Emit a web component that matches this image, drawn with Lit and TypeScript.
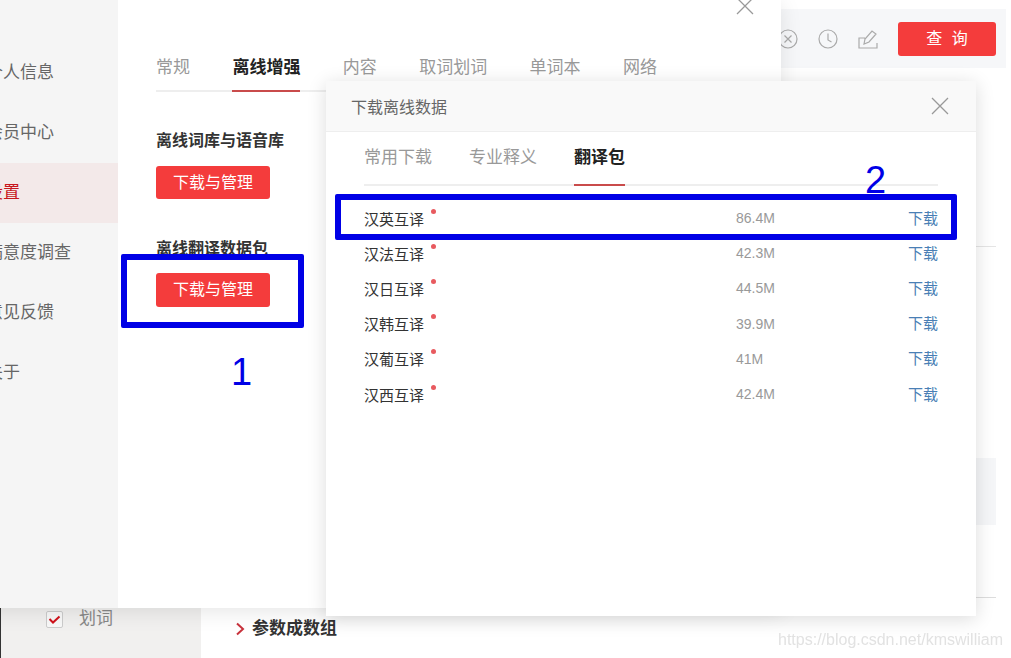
import { LitElement, html, css } from 'lit';
import { customElement } from 'lit/decorators.js';

const NAV = ['个人信息', '会员中心', '设置', '满意度调查', '意见反馈', '关于'];
const SETTING_TABS = ['常规', '离线增强', '内容', '取词划词', '单词本', '网络'];
const DOWNLOAD_TABS = ['常用下载', '专业释义', '翻译包'];
const PACKS = [
  ['汉英互译', '86.4M'],
  ['汉法互译', '42.3M'],
  ['汉日互译', '44.5M'],
  ['汉韩互译', '39.9M'],
  ['汉葡互译', '41M'],
  ['汉西互译', '42.4M'],
];

const closeIcon = html`<svg width="18" height="18" viewBox="0 0 18 18" fill="none" stroke="#999" stroke-width="1.3"><path d="M1 1l16 16M17 1L1 17" /></svg>`;

@customElement('app-root')
export class AppRoot extends LitElement {
  static styles = css`
    :host {
      display: block;
      position: relative;
      width: 1011px;
      height: 658px;
      overflow: hidden;
      background: #fff;
      font-family: "Liberation Sans", "Noto Sans CJK SC", sans-serif;
    }

    /* page behind the dialogs */
    .backdrop {
      display: flex;
      height: 100%;
    }
    .sidebar {
      width: 200px;
      flex-shrink: 0;
      display: flex;
      flex-direction: column;
      justify-content: flex-end;
      background: #f1f0ef;
      border-left: 1px solid #333;
    }
    .check-row {
      display: flex;
      align-items: center;
      gap: 16px;
      margin-bottom: 27px;
      padding-left: 45px;
      font-size: 17px;
      line-height: 24px;
      color: #888;
    }
    .check {
      width: 17px;
      height: 17px;
      box-sizing: border-box;
      display: flex;
      align-items: center;
      justify-content: center;
      background: #f8f8f8;
      border: 1px solid #ccc;
      border-radius: 2px;
    }
    .main {
      flex: 1;
      position: relative;
      display: flex;
      flex-direction: column;
      align-items: flex-end;
      padding-right: 15px;
    }
    .toolbar {
      width: 240px;
      height: 59px;
      box-sizing: border-box;
      margin: 9px -10px 0 0;
      padding-right: 10px;
      display: flex;
      align-items: center;
      justify-content: flex-end;
      background: #f6f7f9;
    }
    .tool-icons {
      display: flex;
      align-items: center;
      gap: 20px;
      margin-right: 20px;
    }
    .query {
      flex-shrink: 0;
      width: 98px;
      height: 34px;
      border-radius: 3px;
      background: #f43c3c;
      color: #fff;
      font-size: 16px;
      line-height: 34px;
      text-align: center;
      word-spacing: 5px;
    }
    .rule {
      width: 300px;
      height: 1px;
      background: #e5e5e5;
    }
    .rule.first {
      margin-top: 178px;
    }
    .block {
      width: 300px;
      height: 67px;
      margin-top: 211px;
      background: #f5f6f8;
    }
    .rule.second {
      margin-top: 72px;
      background: #ddd;
    }
    .param {
      position: absolute;
      left: 34px;
      top: 617px;
      display: flex;
      align-items: center;
      gap: 7px;
      font-size: 17px;
      font-weight: 700;
      line-height: 24px;
      color: #333;
    }
    .param-next {
      position: absolute;
      left: 51px;
      top: 656px;
      font-size: 17px;
      font-weight: 700;
      line-height: 24px;
      color: #333;
    }

    /* settings dialog */
    .settings {
      position: absolute;
      left: -40px;
      top: 0;
      width: 821px;
      height: 608px;
      display: flex;
      background: #fff;
      box-shadow: 0 4px 20px rgba(0, 0, 0, 0.1);
    }
    .nav {
      width: 158px;
      flex-shrink: 0;
      padding-top: 43px;
      box-sizing: border-box;
      background: #f5f5f5;
    }
    .nav-item {
      height: 60px;
      padding-left: 26px;
      font-size: 17px;
      line-height: 60px;
      color: #666;
    }
    .nav-item.active {
      background: #f3e9e9;
      color: #c8161d;
    }
    .content {
      flex: 1;
      position: relative;
      padding: 50px 38px 0;
    }
    .settings-close {
      position: absolute;
      right: 27px;
      top: -3px;
    }
    .tabs {
      display: flex;
      gap: 42.4px;
      border-bottom: 2px solid #eee;
      font-size: 17px;
      line-height: 24px;
      color: #999;
    }
    .tab {
      margin-bottom: -2px;
      padding: 6px 0 10px;
      border-bottom: 2px solid transparent;
    }
    .tab.active {
      border-bottom-color: #c94b4b;
      color: #222;
      font-weight: 700;
    }
    .section-title {
      margin-top: 37px;
      font-size: 16px;
      font-weight: 700;
      line-height: 24px;
      color: #333;
    }
    .section-title.second {
      margin-top: 38px;
    }
    .primary {
      width: 114px;
      height: 33px;
      margin-top: 13px;
      border-radius: 3px;
      background: #f43c3c;
      color: #fff;
      font-size: 16px;
      line-height: 33px;
      text-align: center;
    }
    .primary.tall {
      height: 34px;
      margin-top: 12px;
      line-height: 34px;
    }

    /* download dialog */
    .download {
      position: absolute;
      left: 326px;
      top: 81px;
      width: 650px;
      height: 535px;
      background: #fff;
      box-shadow: 0 3px 18px rgba(0, 0, 0, 0.14);
    }
    .download-head {
      height: 51px;
      box-sizing: border-box;
      display: flex;
      align-items: center;
      justify-content: space-between;
      padding: 0 27px 0 25px;
      background: #f9f9f9;
      border-bottom: 1px solid #eee;
      font-size: 16px;
      color: #666;
    }
    .download-body {
      padding: 0 38px;
    }
    .download-body .tabs {
      gap: 37px;
    }
    .download-body .tab {
      padding: 14px 0 14px;
    }
    .packs {
      margin-top: 13.5px;
    }
    .pack {
      height: 35.2px;
      display: grid;
      grid-template-columns: 372px 1fr auto;
      align-items: center;
      font-size: 15px;
      color: #333;
    }
    .pack-name {
      display: flex;
      align-items: flex-start;
      gap: 7px;
      line-height: 22px;
      padding-top: 5px;
    }
    .dot {
      width: 5px;
      height: 5px;
      border-radius: 50%;
      background: #e85a5f;
    }
    .size {
      padding-top: 2px;
      font-size: 14px;
      color: #999;
    }
    .get {
      color: #4a7fb5;
    }

    /* annotations drawn over the screenshot */
    .mark {
      position: absolute;
      box-sizing: border-box;
      border: 6px solid #0000e6;
      border-radius: 2px;
    }
    .mark.one {
      left: 121px;
      top: 254px;
      width: 183px;
      height: 74px;
    }
    .mark.two {
      left: 335px;
      top: 194px;
      width: 622px;
      height: 46px;
    }
    .num {
      position: absolute;
      font-size: 38px;
      line-height: 38px;
      color: #0000e6;
    }
    .num.one {
      left: 231px;
      top: 353px;
    }
    .num.two {
      left: 865px;
      top: 161px;
    }
    .watermark {
      position: absolute;
      left: 778px;
      top: 630px;
      font-size: 16px;
      line-height: 20px;
      color: #e2e2e2;
      filter: blur(0.4px);
    }
  `;

  private tabs(items: string[], active: string) {
    return html`<div class="tabs">
      ${items.map((t) => html`<div class="tab ${t === active ? 'active' : ''}">${t}</div>`)}
    </div>`;
  }

  private backdrop() {
    return html`<div class="backdrop">
      <div class="sidebar">
        <div class="check-row">
          <span class="check">
            <svg width="13" height="11" viewBox="0 0 13 11" fill="none" stroke="#d0121b" stroke-width="2"><path d="M1.5 5l3.5 3.5 6.5-6" /></svg>
          </span>
          划词
        </div>
      </div>
      <div class="main">
        <div class="toolbar">
          <div class="tool-icons">
            <svg width="20" height="20" viewBox="0 0 20 20" fill="none" stroke="#aaa" stroke-width="1.2"><circle cx="10" cy="10" r="9" /><path d="M6.5 6.5l7 7M13.5 6.5l-7 7" /></svg>
            <svg width="20" height="20" viewBox="0 0 20 20" fill="none" stroke="#aaa" stroke-width="1.2"><circle cx="10" cy="10" r="9" /><path d="M10 4.5V11l3.5 2" /></svg>
            <svg width="20" height="20" viewBox="0 0 20 20" fill="none" stroke="#aaa" stroke-width="1.2"><path d="M7 9H1v10h18v-5M6 15l1-5 7-8 4 3-7 8-5 2z" /></svg>
          </div>
          <div class="query">查 询</div>
        </div>
        <div class="rule first"></div>
        <div class="block"></div>
        <div class="rule second"></div>
        <div class="param">
          <svg width="10" height="14" viewBox="0 0 10 14" fill="none" stroke="#c8323c" stroke-width="2"><path d="M2 1.5L8 7l-6 5.5" /></svg>
          参数成数组
        </div>
        <div class="param-next">返回</div>
      </div>
    </div>`;
  }

  private settings() {
    return html`<div class="settings">
      <div class="nav">
        ${NAV.map((n) => html`<div class="nav-item ${n === '设置' ? 'active' : ''}">${n}</div>`)}
      </div>
      <div class="content">
        <div class="settings-close">${closeIcon}</div>
        ${this.tabs(SETTING_TABS, '离线增强')}
        <div class="section-title">离线词库与语音库</div>
        <div class="primary">下载与管理</div>
        <div class="section-title second">离线翻译数据包</div>
        <div class="primary tall">下载与管理</div>
      </div>
    </div>`;
  }

  private download() {
    return html`<div class="download">
      <div class="download-head">
        <span>下载离线数据</span>
        ${closeIcon}
      </div>
      <div class="download-body">
        ${this.tabs(DOWNLOAD_TABS, '翻译包')}
        <div class="packs">
          ${PACKS.map(
            ([name, size]) => html`<div class="pack">
              <div class="pack-name">${name}<span class="dot"></span></div>
              <div class="size">${size}</div>
              <div class="get">下载</div>
            </div>`
          )}
        </div>
      </div>
    </div>`;
  }

  render() {
    return html`
      ${this.backdrop()} ${this.settings()} ${this.download()}
      <div class="mark one"></div>
      <div class="mark two"></div>
      <div class="num one">1</div>
      <div class="num two">2</div>
      <div class="watermark">https://blog.csdn.net/kmswilliam</div>
    `;
  }
}
